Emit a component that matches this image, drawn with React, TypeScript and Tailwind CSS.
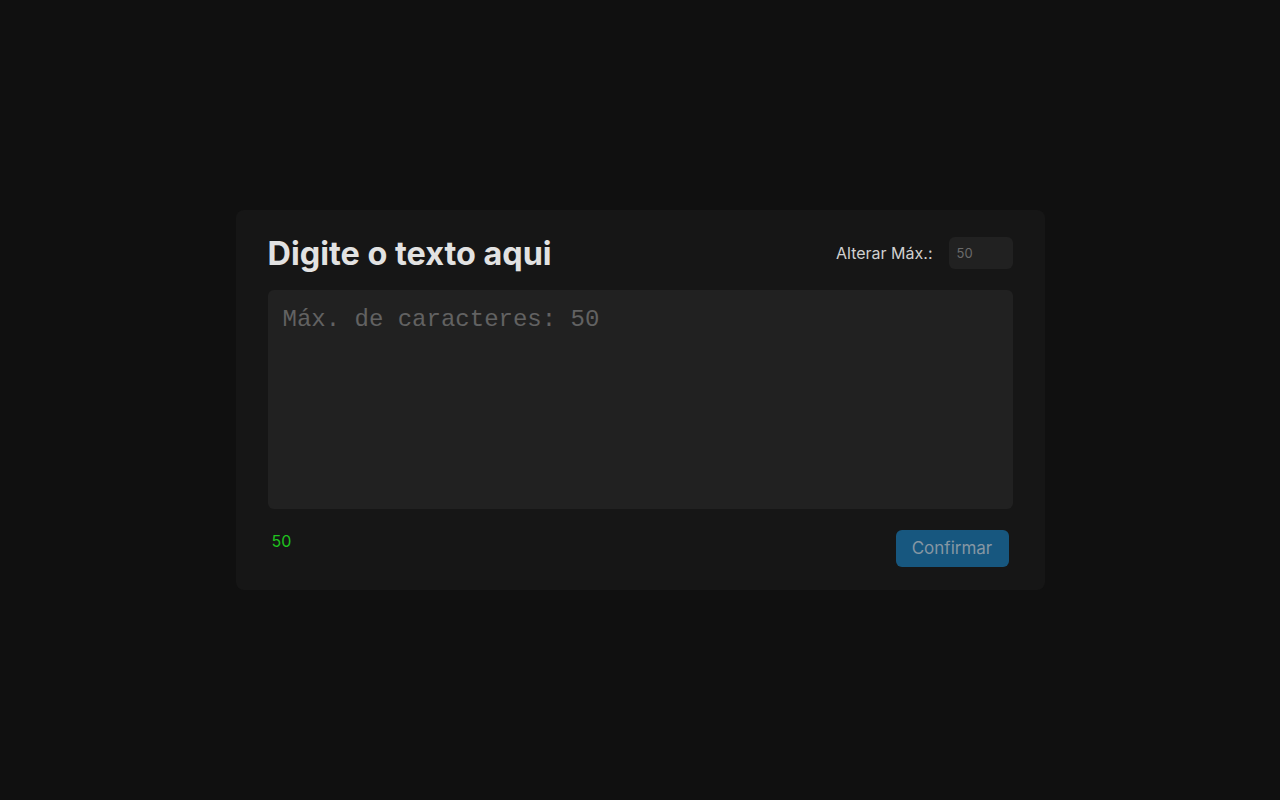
import { useState } from "react";

export default function App() {
  const [max, setMax] = useState("");
  const [text, setText] = useState("");
  const limit = Number(max) || 50;

  return (
    <div
      className="min-h-screen w-full bg-[#101010] flex items-center justify-center"
      style={{ fontFamily: "Inter, 'Noto Sans', sans-serif" }}
    >
      <div className="w-[809px] h-[380px] rounded-lg bg-[#161616] px-8 pt-[21px]">
        <div className="flex items-center justify-between h-[44px]">
          <h1 className="mt-[3px] text-[32.4px] font-bold text-[#e2e2e2] leading-none">
            Digite o texto aqui
          </h1>
          <div className="flex items-center gap-4">
            <span className="text-[16px] text-[#d0d0d0]">Alterar Máx.:</span>
            <input
              value={max}
              onChange={(e) => setMax(e.target.value)}
              placeholder="50"
              className="w-16 h-[32px] rounded-md bg-[#212121] px-2 text-[13px] text-[#ccc] placeholder-[#6a6a6a] outline-none"
            />
          </div>
        </div>

        <textarea
          value={text}
          autoFocus
          maxLength={limit}
          onChange={(e) => setText(e.target.value)}
          placeholder={`Máx. de caracteres: ${limit}`}
          className="mt-[15px] block w-full h-[219px] resize-none rounded-md bg-[#212121] px-[15px] py-[12px] text-[24px] text-[#ddd] placeholder-[#626262] outline-none caret-[#ddd]"
          style={{ fontFamily: "'Liberation Mono', 'Courier New', monospace" }}
        />

        <div className="flex items-start justify-between mt-[21px] pr-1">
          <span className="ml-1 -mt-[1px] text-[16px] text-[#1fc21f]">
            {limit - text.length}
          </span>
          <button className="h-[37px] w-[113px] rounded-md bg-[#17577f] text-[17px] text-[#8596a3]">
            Confirmar
          </button>
        </div>
      </div>
    </div>
  );
}
